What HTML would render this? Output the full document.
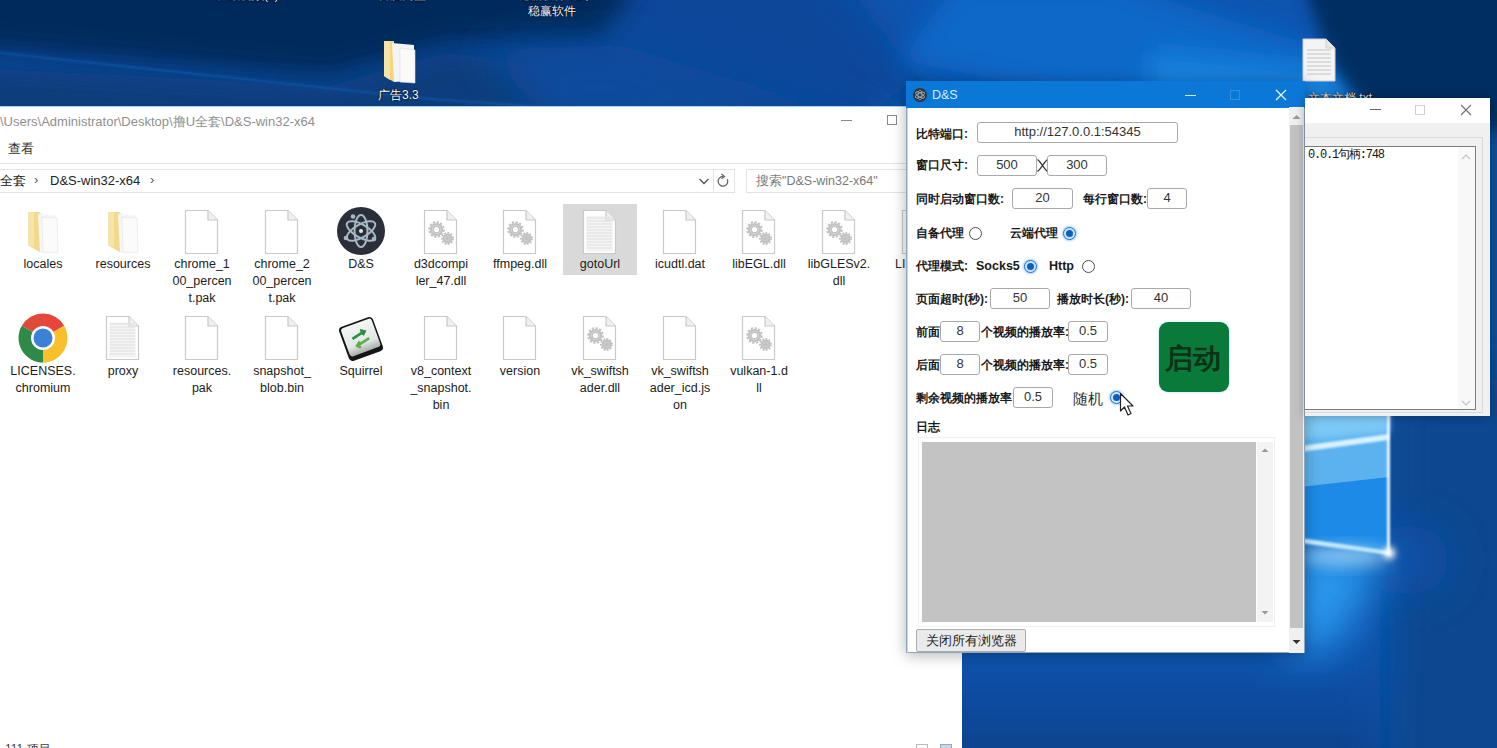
<!DOCTYPE html><html><head><meta charset="utf-8"><style>
*{margin:0;padding:0;box-sizing:border-box}
html,body{width:1497px;height:748px;overflow:hidden}
body{position:relative;font-family:"Liberation Sans",sans-serif;font-size:12px;color:#222;background:#0a4a9a}
.a{position:absolute}
.nw{white-space:nowrap}
.lbl{position:absolute;text-align:center;width:80px;font-size:12.5px;line-height:17px;color:#1c1c1c;word-break:break-all}
.tx{position:absolute;font-size:12px;font-weight:bold;color:#1a1a1a;white-space:nowrap;line-height:14px}
.box{position:absolute;border:1px solid #a9a9a9;border-radius:3px;background:#fff;font-size:13px;text-align:center;color:#333;line-height:18px}
.radio{position:absolute;width:13px;height:13px;border:1px solid #4d4d4d;border-radius:50%;background:#fff}
.radio.on{border-color:#1a7ad8;background:#cfe5f8;box-shadow:0 0 2px 1px rgba(80,160,240,.5)}
.radio.on:after{content:"";position:absolute;left:2px;top:2px;width:7px;height:7px;border-radius:50%;background:#0b5fc2}
</style></head><body>
<svg class="a" style="left:0;top:0" width="1497" height="748" viewBox="0 0 1497 748">
<defs>
<filter id="b20" x="-50%" y="-50%" width="200%" height="200%"><feGaussianBlur stdDeviation="20"/></filter>
<filter id="b12" x="-50%" y="-50%" width="200%" height="200%"><feGaussianBlur stdDeviation="12"/></filter>
<filter id="b8" x="-50%" y="-50%" width="200%" height="200%"><feGaussianBlur stdDeviation="8"/></filter>
<filter id="b3" x="-50%" y="-50%" width="200%" height="200%"><feGaussianBlur stdDeviation="3"/></filter>
<filter id="b1" x="-50%" y="-50%" width="200%" height="200%"><feGaussianBlur stdDeviation="1.2"/></filter>
<radialGradient id="rg1" cx="1120" cy="40" r="520" gradientUnits="userSpaceOnUse">
<stop offset="0" stop-color="#1070d4"/><stop offset=".45" stop-color="#0a58b0"/><stop offset="1" stop-color="#07336a"/></radialGradient>
<linearGradient id="lgb" x1="0" y1="650" x2="0" y2="748" gradientUnits="userSpaceOnUse"><stop offset="0" stop-color="#0a55b0"/><stop offset="1" stop-color="#08428e"/></linearGradient>
</defs>
<rect width="1497" height="748" fill="#0a4f9f"/>
<polygon points="-100,-100 1000,-100 1000,130 -100,130" fill="#0a52a8"/>
<polygon points="-100,-100 760,-100 950,50 850,130 -100,130" fill="#08469a" filter="url(#b12)"/>
<polygon points="-100,-100 690,-100 600,40 450,45 330,78 0,50 -100,50" fill="#062b5c" filter="url(#b12)"/>
<polygon points="-100,64 330,86 450,52 880,125 -100,125" fill="#093c7c" filter="url(#b12)"/>
<polygon points="480,50 620,45 900,130 560,130" fill="#0a4c9e" filter="url(#b20)"/>

<polygon points="780,-100 1340,-100 1320,130 960,130" fill="#0a55b0" filter="url(#b20)"/>
<polygon points="960,-20 1100,-20 1360,60 1360,110 1150,110 900,60" fill="#0c68c8" filter="url(#b12)"/>
<polygon points="1150,50 1350,70 1350,110 1150,110" fill="#1680dc" filter="url(#b12)"/>
<polygon points="1270,-100 1600,-100 1600,130 1380,130 1335,70" fill="#062f62" filter="url(#b8)"/>
<polyline points="0,53 430,99 560,108" fill="none" stroke="#0d52a2" stroke-width="2" filter="url(#b1)"/>
<!-- lower right -->
<rect x="950" y="400" width="600" height="400" fill="#0a50a4"/>
<polygon points="1390,380 1600,380 1600,800 1390,800" fill="#09468f" filter="url(#b20)"/>
<ellipse cx="1405" cy="560" rx="45" ry="35" fill="#0a50a6" filter="url(#b20)"/>
<rect x="900" y="590" width="480" height="220" fill="url(#lgb)" filter="url(#b20)"/>
<polygon points="1290,545 1389,553 1340,640 1290,660" fill="#2b98ee" filter="url(#b20)"/>
<polygon points="1300,410 1389,410 1389,553 1300,540" fill="#1c8ae6"/>
<polygon points="1300,410 1389,410 1389,477 1300,487" fill="#5cb2ee"/>
<polygon points="1300,410 1389,410 1389,432 1300,440" fill="#7cc8f6" filter="url(#b3)"/>
<polygon points="1300,446 1389,434 1389,440 1300,452" fill="#d8f2ff" filter="url(#b1)"/>
<polygon points="1300,538 1389,551 1389,555 1300,543" fill="#d0f0ff" filter="url(#b1)"/>
<rect x="1387" y="410" width="3" height="145" fill="#eaf8ff" filter="url(#b1)"/>
<ellipse cx="1345" cy="556" rx="45" ry="10" fill="#a8ddff" filter="url(#b8)" opacity=".75"/>
<circle cx="1389" cy="553" r="6" fill="#ffffff" filter="url(#b3)"/>
</svg>
<div class="a nw" style="left:216px;top:-10px;font-size:12px;color:#fff;text-shadow:0 0 2px #000">&nbsp;</div>
<div class="a nw" style="left:216px;top:-12px;font-size:12px;line-height:15px;color:#e8eef5;text-shadow:0 1px 2px #000,0 0 1px #000">腾讯视频(2)</div>
<div class="a nw" style="left:378px;top:-12px;font-size:12px;line-height:15px;color:#e8eef5;text-shadow:0 1px 2px #000,0 0 1px #000">百度网盘</div>
<div class="a nw" style="left:518px;top:-12px;font-size:12px;line-height:15px;color:#e8eef5;text-shadow:0 1px 2px #000,0 0 1px #000">稳赢软件-助手</div>
<div class="a nw" style="left:528px;top:4px;font-size:12px;line-height:15px;color:#eef;text-shadow:0 0 2px #000,0 0 1px #000">稳赢软件</div>
<svg class="a" style="left:380px;top:38px" width="40" height="48" viewBox="0 0 40 48">
<path d="M4 3 L14 3 L14 44 L4 38 Z" fill="#f3d57f"/>
<path d="M12 5 L34 7 L34 43 L14 44 Z" fill="#f4f4f4"/>
<path d="M20 10 L35 12 L35 45 L20 44 Z" fill="#fafafa" stroke="#ddd" stroke-width=".6"/>
<path d="M4 3 L10 3 L10 42 L4 38 Z" fill="#f6e3a6"/>
</svg>
<div class="a nw" style="left:378px;top:88px;font-size:12px;line-height:15px;color:#fff;text-shadow:0 0 2px #000,0 0 1px #000">广告3.3</div>
<svg class="a" style="left:1301px;top:38px" width="36" height="44" viewBox="0 0 36 44">
<path d="M2 1 H25 L34 10 V43 H2 Z" fill="#f4f4f4" stroke="#cfcfcf"/>
<path d="M25 1 V10 H34" fill="#e6e6e6" stroke="#cfcfcf"/>
<g stroke="#c4c4c4" stroke-width="1">
<line x1="6" y1="12" x2="30" y2="12"/><line x1="6" y1="16" x2="30" y2="16"/><line x1="6" y1="20" x2="30" y2="20"/>
<line x1="6" y1="24" x2="30" y2="24"/><line x1="6" y1="28" x2="30" y2="28"/><line x1="6" y1="32" x2="30" y2="32"/><line x1="6" y1="36" x2="30" y2="36"/></g>
</svg>
<div class="a nw" style="left:1308px;top:91px;font-size:12px;line-height:14px;color:#dfe8f0;text-shadow:0 1px 2px #000,0 0 1px #000">文本文档.txt</div>
<div class="a" style="left:0;top:106px;width:962px;height:642px;background:#fff;overflow:hidden">
<div class="a" style="left:0;top:0;width:962px;height:1px;background:#9fd4f6"></div>
<div class="a nw" style="left:0px;top:8px;font-size:13px;line-height:15px;color:#8f8f8f">\Users\Administrator\Desktop\撸U全套\D&amp;S-win32-x64</div>
<div class="a" style="left:841px;top:14px;width:11px;height:1px;background:#8a8a8a"></div>
<div class="a" style="left:887px;top:9px;width:10px;height:10px;border:1px solid #8a8a8a"></div>
<div class="a nw" style="left:8px;top:36px;font-size:12.5px;line-height:15px;color:#333">查看</div>
<div class="a" style="left:0;top:57px;width:962px;height:1px;background:#e3e3e3"></div>
<div class="a" style="left:0;top:63px;width:735px;height:24px;border:1px solid #e3e3e3;border-left:none"></div>
<div class="a" style="left:713px;top:63px;width:1px;height:24px;background:#e3e3e3"></div>
<svg class="a" style="left:698px;top:70px" width="12" height="10" viewBox="0 0 12 10"><path d="M1.5 3 L6 7.5 L10.5 3" fill="none" stroke="#555" stroke-width="1.4"/></svg>
<svg class="a" style="left:716px;top:67px" width="14" height="16" viewBox="0 0 14 16"><path d="M7 3.5 A4.8 4.8 0 1 0 11.3 6.2" fill="none" stroke="#666" stroke-width="1.3"/><path d="M5.5 1 L8.5 3.5 L5.5 5.8" fill="none" stroke="#666" stroke-width="1.3"/></svg>
<div class="a nw" style="left:0px;top:67px;font-size:13px;line-height:15px;color:#222">全套</div>
<div class="a nw" style="left:34px;top:66px;font-size:13px;line-height:15px;color:#555">›</div>
<div class="a nw" style="left:50px;top:67px;font-size:13px;line-height:15px;color:#222">D&amp;S-win32-x64</div>
<div class="a nw" style="left:150px;top:66px;font-size:13px;line-height:15px;color:#555">›</div>
<div class="a" style="left:746px;top:63px;width:230px;height:24px;border:1px solid #e3e3e3"></div>
<div class="a nw" style="left:756px;top:68px;font-size:12.5px;line-height:15px;color:#7a7a7a">搜索"D&amp;S-win32-x64"</div>
<div class="a" style="left:563px;top:98px;width:74px;height:71px;background:#d9d9d9"></div>
<svg class="a" style="left:26px;top:105px" width="34" height="44" viewBox="0 0 34 44">
<path d="M2 1 L13 1 L15 3 L15 42 L2 34 Z" fill="#f3d98a"/>
<path d="M12 3 L30 4 L31 41 L14 42 Z" fill="#f6f6f6"/>
<path d="M16 6 L31 7 L32 42 L17 41 Z" fill="#fbfbfb" stroke="#e2e2e2" stroke-width=".6"/>
<path d="M2 1 L8 1 L8 36 L2 34 Z" fill="#f6e4a8"/>
</svg>
<div class="lbl" style="left:3px;top:150px">locales</div>
<svg class="a" style="left:106px;top:105px" width="34" height="44" viewBox="0 0 34 44">
<path d="M2 1 L13 1 L15 3 L15 42 L2 34 Z" fill="#f3d98a"/>
<path d="M12 3 L30 4 L31 41 L14 42 Z" fill="#f6f6f6"/>
<path d="M16 6 L31 7 L32 42 L17 41 Z" fill="#fbfbfb" stroke="#e2e2e2" stroke-width=".6"/>
<path d="M2 1 L8 1 L8 36 L2 34 Z" fill="#f6e4a8"/>
</svg>
<div class="lbl" style="left:83px;top:150px">resources</div>
<svg class="a" style="left:184px;top:103px" width="36" height="46" viewBox="0 0 36 46"><path d="M1.5 1.5 H24 L33.5 11 V44.5 H1.5 Z" fill="#fff" stroke="#c9c9c9" stroke-width="1.2"/><path d="M24 1.5 V11 H33.5" fill="#f0f0f0" stroke="#c9c9c9" stroke-width="1.2"/></svg>
<div class="lbl" style="left:162px;top:150px">chrome_1<br>00_percen<br>t.pak</div>
<svg class="a" style="left:264px;top:103px" width="36" height="46" viewBox="0 0 36 46"><path d="M1.5 1.5 H24 L33.5 11 V44.5 H1.5 Z" fill="#fff" stroke="#c9c9c9" stroke-width="1.2"/><path d="M24 1.5 V11 H33.5" fill="#f0f0f0" stroke="#c9c9c9" stroke-width="1.2"/></svg>
<div class="lbl" style="left:242px;top:150px">chrome_2<br>00_percen<br>t.pak</div>
<svg class="a" style="left:336px;top:100px" width="50" height="50" viewBox="0 0 50 50">
<circle cx="25" cy="25" r="24" fill="#2c2f3a"/>
<g fill="none" stroke="#a6b8c4" stroke-width="2">
<ellipse cx="25" cy="25" rx="16" ry="6.5" transform="rotate(-30 25 25)"/>
<ellipse cx="25" cy="25" rx="16" ry="6.5" transform="rotate(30 25 25)"/>
<ellipse cx="25" cy="25" rx="16" ry="6.5" transform="rotate(90 25 25)"/></g>
<circle cx="25" cy="25" r="2" fill="#dfe8ee"/>
<circle cx="17" cy="10.5" r="2.3" fill="#a6b8c4"/><circle cx="10" cy="32" r="2.3" fill="#a6b8c4"/><circle cx="38" cy="33" r="2.3" fill="#a6b8c4"/>
</svg>
<div class="lbl" style="left:321px;top:150px">D&amp;S</div>
<svg class="a" style="left:423px;top:103px" width="36" height="46" viewBox="0 0 36 46"><path d="M1.5 1.5 H24 L33.5 11 V44.5 H1.5 Z" fill="#fff" stroke="#c9c9c9" stroke-width="1.2"/><path d="M24 1.5 V11 H33.5" fill="#f0f0f0" stroke="#c9c9c9" stroke-width="1.2"/><g fill="#c2c2c2"><circle cx="13.5" cy="20.5" r="6.6"/><circle cx="24.5" cy="29.5" r="5"/></g><g fill="none" stroke="#c2c2c2"><circle cx="13.5" cy="20.5" r="7.3" stroke-width="2" stroke-dasharray="2.3 1.5"/><circle cx="24.5" cy="29.5" r="5.6" stroke-width="1.8" stroke-dasharray="1.9 1.3"/></g><circle cx="13.5" cy="20.5" r="4.2" fill="none" stroke="#d6d6d6" stroke-width="1"/><circle cx="13.5" cy="20.5" r="2.6" fill="#fff"/><circle cx="24.5" cy="29.5" r="2.6" fill="none" stroke="#d2d2d2" stroke-width=".8"/></svg>
<div class="lbl" style="left:401px;top:150px">d3dcompi<br>ler_47.dll</div>
<svg class="a" style="left:502px;top:103px" width="36" height="46" viewBox="0 0 36 46"><path d="M1.5 1.5 H24 L33.5 11 V44.5 H1.5 Z" fill="#fff" stroke="#c9c9c9" stroke-width="1.2"/><path d="M24 1.5 V11 H33.5" fill="#f0f0f0" stroke="#c9c9c9" stroke-width="1.2"/><g fill="#c2c2c2"><circle cx="13.5" cy="20.5" r="6.6"/><circle cx="24.5" cy="29.5" r="5"/></g><g fill="none" stroke="#c2c2c2"><circle cx="13.5" cy="20.5" r="7.3" stroke-width="2" stroke-dasharray="2.3 1.5"/><circle cx="24.5" cy="29.5" r="5.6" stroke-width="1.8" stroke-dasharray="1.9 1.3"/></g><circle cx="13.5" cy="20.5" r="4.2" fill="none" stroke="#d6d6d6" stroke-width="1"/><circle cx="13.5" cy="20.5" r="2.6" fill="#fff"/><circle cx="24.5" cy="29.5" r="2.6" fill="none" stroke="#d2d2d2" stroke-width=".8"/></svg>
<div class="lbl" style="left:480px;top:150px">ffmpeg.dll</div>
<svg class="a" style="left:582px;top:103px" width="36" height="46" viewBox="0 0 36 46"><path d="M1.5 1.5 H24 L33.5 11 V44.5 H1.5 Z" fill="#fff" stroke="#c9c9c9" stroke-width="1.2"/><path d="M24 1.5 V11 H33.5" fill="#f0f0f0" stroke="#c9c9c9" stroke-width="1.2"/><g stroke="#cfcfcf"><line x1="5" y1="9" x2="30" y2="9"/><line x1="5" y1="12" x2="30" y2="12"/><line x1="5" y1="15" x2="30" y2="15"/><line x1="5" y1="18" x2="30" y2="18"/><line x1="5" y1="21" x2="30" y2="21"/><line x1="5" y1="24" x2="30" y2="24"/><line x1="5" y1="27" x2="30" y2="27"/><line x1="5" y1="30" x2="30" y2="30"/><line x1="5" y1="33" x2="30" y2="33"/><line x1="5" y1="36" x2="30" y2="36"/><line x1="5" y1="39" x2="30" y2="39"/></g><rect x="4" y="7" width="27" height="36" fill="#ececec" opacity=".5"/></svg>
<div class="lbl" style="left:560px;top:150px">gotoUrl</div>
<svg class="a" style="left:662px;top:103px" width="36" height="46" viewBox="0 0 36 46"><path d="M1.5 1.5 H24 L33.5 11 V44.5 H1.5 Z" fill="#fff" stroke="#c9c9c9" stroke-width="1.2"/><path d="M24 1.5 V11 H33.5" fill="#f0f0f0" stroke="#c9c9c9" stroke-width="1.2"/></svg>
<div class="lbl" style="left:640px;top:150px">icudtl.dat</div>
<svg class="a" style="left:741px;top:103px" width="36" height="46" viewBox="0 0 36 46"><path d="M1.5 1.5 H24 L33.5 11 V44.5 H1.5 Z" fill="#fff" stroke="#c9c9c9" stroke-width="1.2"/><path d="M24 1.5 V11 H33.5" fill="#f0f0f0" stroke="#c9c9c9" stroke-width="1.2"/><g fill="#c2c2c2"><circle cx="13.5" cy="20.5" r="6.6"/><circle cx="24.5" cy="29.5" r="5"/></g><g fill="none" stroke="#c2c2c2"><circle cx="13.5" cy="20.5" r="7.3" stroke-width="2" stroke-dasharray="2.3 1.5"/><circle cx="24.5" cy="29.5" r="5.6" stroke-width="1.8" stroke-dasharray="1.9 1.3"/></g><circle cx="13.5" cy="20.5" r="4.2" fill="none" stroke="#d6d6d6" stroke-width="1"/><circle cx="13.5" cy="20.5" r="2.6" fill="#fff"/><circle cx="24.5" cy="29.5" r="2.6" fill="none" stroke="#d2d2d2" stroke-width=".8"/></svg>
<div class="lbl" style="left:719px;top:150px">libEGL.dll</div>
<svg class="a" style="left:821px;top:103px" width="36" height="46" viewBox="0 0 36 46"><path d="M1.5 1.5 H24 L33.5 11 V44.5 H1.5 Z" fill="#fff" stroke="#c9c9c9" stroke-width="1.2"/><path d="M24 1.5 V11 H33.5" fill="#f0f0f0" stroke="#c9c9c9" stroke-width="1.2"/><g fill="#c2c2c2"><circle cx="13.5" cy="20.5" r="6.6"/><circle cx="24.5" cy="29.5" r="5"/></g><g fill="none" stroke="#c2c2c2"><circle cx="13.5" cy="20.5" r="7.3" stroke-width="2" stroke-dasharray="2.3 1.5"/><circle cx="24.5" cy="29.5" r="5.6" stroke-width="1.8" stroke-dasharray="1.9 1.3"/></g><circle cx="13.5" cy="20.5" r="4.2" fill="none" stroke="#d6d6d6" stroke-width="1"/><circle cx="13.5" cy="20.5" r="2.6" fill="#fff"/><circle cx="24.5" cy="29.5" r="2.6" fill="none" stroke="#d2d2d2" stroke-width=".8"/></svg>
<div class="lbl" style="left:799px;top:150px">libGLESv2.<br>dll</div>
<svg class="a" style="left:901px;top:103px" width="36" height="46" viewBox="0 0 36 46"><path d="M1.5 1.5 H24 L33.5 11 V44.5 H1.5 Z" fill="#fff" stroke="#c9c9c9" stroke-width="1.2"/><path d="M24 1.5 V11 H33.5" fill="#f0f0f0" stroke="#c9c9c9" stroke-width="1.2"/></svg>
<div class="a nw" style="left:895px;top:150px;font-size:12.5px;line-height:17px;color:#2a2a2a">LICENSES.</div>
<svg class="a" style="left:17px;top:206px" width="52" height="52" viewBox="0 0 52 52">
<path d="M26 26 L26 1.5 A24.5 24.5 0 0 1 47.2 13.75 Z" fill="#e8463a"/>
<path d="M26 26 L26 1.5 A24.5 24.5 0 0 0 4.8 13.75 Z" fill="#df4a38"/>
<path d="M26 26 L4.8 13.75 A24.5 24.5 0 0 0 26 50.5 Z" fill="#2f8a47"/>
<path d="M26 26 L26 50.5 A24.5 24.5 0 0 0 47.2 13.75 Z" fill="#f8c02c"/>
<circle cx="26" cy="26" r="12" fill="#fff"/>
<circle cx="26" cy="26" r="9.5" fill="#3b82d6"/>
</svg>
<div class="lbl" style="left:3px;top:257px">LICENSES.<br>chromium</div>
<svg class="a" style="left:105px;top:209px" width="36" height="46" viewBox="0 0 36 46"><path d="M1.5 1.5 H24 L33.5 11 V44.5 H1.5 Z" fill="#fff" stroke="#c9c9c9" stroke-width="1.2"/><path d="M24 1.5 V11 H33.5" fill="#f0f0f0" stroke="#c9c9c9" stroke-width="1.2"/><g stroke="#cfcfcf"><line x1="5" y1="9" x2="30" y2="9"/><line x1="5" y1="12" x2="30" y2="12"/><line x1="5" y1="15" x2="30" y2="15"/><line x1="5" y1="18" x2="30" y2="18"/><line x1="5" y1="21" x2="30" y2="21"/><line x1="5" y1="24" x2="30" y2="24"/><line x1="5" y1="27" x2="30" y2="27"/><line x1="5" y1="30" x2="30" y2="30"/><line x1="5" y1="33" x2="30" y2="33"/><line x1="5" y1="36" x2="30" y2="36"/><line x1="5" y1="39" x2="30" y2="39"/></g><rect x="4" y="7" width="27" height="36" fill="#ececec" opacity=".5"/></svg>
<div class="lbl" style="left:83px;top:257px">proxy</div>
<svg class="a" style="left:184px;top:209px" width="36" height="46" viewBox="0 0 36 46"><path d="M1.5 1.5 H24 L33.5 11 V44.5 H1.5 Z" fill="#fff" stroke="#c9c9c9" stroke-width="1.2"/><path d="M24 1.5 V11 H33.5" fill="#f0f0f0" stroke="#c9c9c9" stroke-width="1.2"/></svg>
<div class="lbl" style="left:162px;top:257px">resources.<br>pak</div>
<svg class="a" style="left:264px;top:209px" width="36" height="46" viewBox="0 0 36 46"><path d="M1.5 1.5 H24 L33.5 11 V44.5 H1.5 Z" fill="#fff" stroke="#c9c9c9" stroke-width="1.2"/><path d="M24 1.5 V11 H33.5" fill="#f0f0f0" stroke="#c9c9c9" stroke-width="1.2"/></svg>
<div class="lbl" style="left:242px;top:257px">snapshot_<br>blob.bin</div>
<svg class="a" style="left:336px;top:208px" width="50" height="50" viewBox="0 0 50 50">
<defs><linearGradient id="sqg" x1="0" y1="0" x2="0" y2="1"><stop offset="0" stop-color="#f4f6f6"/><stop offset=".7" stop-color="#e2e6e6"/><stop offset="1" stop-color="#a8acac"/></linearGradient></defs>
<g transform="rotate(-20 25 25)"><rect x="7" y="7" width="36" height="36" rx="4" fill="#151515"/>
<rect x="9" y="8.5" width="32.5" height="30" rx="3" fill="url(#sqg)"/>
<path d="M17 22 L30 19 M27 16.5 L31 19 L28 22" fill="none" stroke="#2f8f3f" stroke-width="2.6"/>
<path d="M33 27 L20 30 M23 27 L19 30 L22 33" fill="none" stroke="#5cb04a" stroke-width="2.6"/></g>
</svg>
<div class="lbl" style="left:321px;top:257px">Squirrel</div>
<svg class="a" style="left:423px;top:209px" width="36" height="46" viewBox="0 0 36 46"><path d="M1.5 1.5 H24 L33.5 11 V44.5 H1.5 Z" fill="#fff" stroke="#c9c9c9" stroke-width="1.2"/><path d="M24 1.5 V11 H33.5" fill="#f0f0f0" stroke="#c9c9c9" stroke-width="1.2"/></svg>
<div class="lbl" style="left:401px;top:257px">v8_context<br>_snapshot.<br>bin</div>
<svg class="a" style="left:502px;top:209px" width="36" height="46" viewBox="0 0 36 46"><path d="M1.5 1.5 H24 L33.5 11 V44.5 H1.5 Z" fill="#fff" stroke="#c9c9c9" stroke-width="1.2"/><path d="M24 1.5 V11 H33.5" fill="#f0f0f0" stroke="#c9c9c9" stroke-width="1.2"/></svg>
<div class="lbl" style="left:480px;top:257px">version</div>
<svg class="a" style="left:582px;top:209px" width="36" height="46" viewBox="0 0 36 46"><path d="M1.5 1.5 H24 L33.5 11 V44.5 H1.5 Z" fill="#fff" stroke="#c9c9c9" stroke-width="1.2"/><path d="M24 1.5 V11 H33.5" fill="#f0f0f0" stroke="#c9c9c9" stroke-width="1.2"/><g fill="#c2c2c2"><circle cx="13.5" cy="20.5" r="6.6"/><circle cx="24.5" cy="29.5" r="5"/></g><g fill="none" stroke="#c2c2c2"><circle cx="13.5" cy="20.5" r="7.3" stroke-width="2" stroke-dasharray="2.3 1.5"/><circle cx="24.5" cy="29.5" r="5.6" stroke-width="1.8" stroke-dasharray="1.9 1.3"/></g><circle cx="13.5" cy="20.5" r="4.2" fill="none" stroke="#d6d6d6" stroke-width="1"/><circle cx="13.5" cy="20.5" r="2.6" fill="#fff"/><circle cx="24.5" cy="29.5" r="2.6" fill="none" stroke="#d2d2d2" stroke-width=".8"/></svg>
<div class="lbl" style="left:560px;top:257px">vk_swiftsh<br>ader.dll</div>
<svg class="a" style="left:662px;top:209px" width="36" height="46" viewBox="0 0 36 46"><path d="M1.5 1.5 H24 L33.5 11 V44.5 H1.5 Z" fill="#fff" stroke="#c9c9c9" stroke-width="1.2"/><path d="M24 1.5 V11 H33.5" fill="#f0f0f0" stroke="#c9c9c9" stroke-width="1.2"/></svg>
<div class="lbl" style="left:640px;top:257px">vk_swiftsh<br>ader_icd.js<br>on</div>
<svg class="a" style="left:741px;top:209px" width="36" height="46" viewBox="0 0 36 46"><path d="M1.5 1.5 H24 L33.5 11 V44.5 H1.5 Z" fill="#fff" stroke="#c9c9c9" stroke-width="1.2"/><path d="M24 1.5 V11 H33.5" fill="#f0f0f0" stroke="#c9c9c9" stroke-width="1.2"/><g fill="#c2c2c2"><circle cx="13.5" cy="20.5" r="6.6"/><circle cx="24.5" cy="29.5" r="5"/></g><g fill="none" stroke="#c2c2c2"><circle cx="13.5" cy="20.5" r="7.3" stroke-width="2" stroke-dasharray="2.3 1.5"/><circle cx="24.5" cy="29.5" r="5.6" stroke-width="1.8" stroke-dasharray="1.9 1.3"/></g><circle cx="13.5" cy="20.5" r="4.2" fill="none" stroke="#d6d6d6" stroke-width="1"/><circle cx="13.5" cy="20.5" r="2.6" fill="#fff"/><circle cx="24.5" cy="29.5" r="2.6" fill="none" stroke="#d2d2d2" stroke-width=".8"/></svg>
<div class="lbl" style="left:719px;top:257px">vulkan-1.d<br>ll</div>
<div class="a nw" style="left:5px;top:636px;font-size:12px;line-height:14px;color:#444">111 项目</div>
<div class="a" style="left:916px;top:638px;width:12px;height:8px;border:1px solid #bbb"></div>
<div class="a" style="left:940px;top:638px;width:12px;height:8px;background:#c5d8ea;border:1px solid #9ab"></div>
</div>
<div class="a" style="left:906px;top:81px;width:399px;height:572px;background:#fff;border:1px solid #8ea6bd;box-shadow:0 2px 14px rgba(0,0,0,.3)">
<div class="a" style="left:-1px;top:-1px;width:399px;height:27px;background:#0b78d7"></div>
<div class="a" style="left:0;top:26px;width:1px;height:545px;background:#c6d8e6"></div>
<svg class="a" style="left:5px;top:5px" width="16" height="16" viewBox="0 0 16 16"><circle cx="8" cy="8" r="7" fill="#2d3340"/>
<g fill="none" stroke="#9aa" stroke-width=".9"><ellipse cx="8" cy="8" rx="5" ry="2" transform="rotate(-30 8 8)"/><ellipse cx="8" cy="8" rx="5" ry="2" transform="rotate(30 8 8)"/><ellipse cx="8" cy="8" rx="5" ry="2" transform="rotate(90 8 8)"/></g></svg>
<div class="a nw" style="left:25px;top:6px;font-size:12.5px;line-height:15px;color:#d6ecff">D&amp;S</div>
<div class="a" style="left:278px;top:13px;width:11px;height:1px;background:#cfe6fb"></div>
<div class="a" style="left:323px;top:8px;width:10px;height:10px;border:1px solid rgba(200,230,255,.22)"></div>
<svg class="a" style="left:368px;top:7px" width="12" height="12" viewBox="0 0 12 12"><path d="M1 1 L11 11 M11 1 L1 11" stroke="#e6f4ff" stroke-width="1.3"/></svg>
<div class="tx" style="left:9px;top:45px">比特端口:</div>
<div class="box" style="left:70px;top:40px;width:201px;height:21px">http://127.0.0.1:54345</div>
<div class="tx" style="left:9px;top:76px">窗口尺寸:</div>
<div class="box" style="left:70px;top:73px;width:60px;height:21px">500</div>
<svg class="a" style="left:129px;top:76px" width="13" height="15" viewBox="0 0 13 15"><path d="M1.5 1.5 C5 4 8 11 11.5 13.5 M11.5 1.5 C8 4 5 11 1.5 13.5" fill="none" stroke="#2a2a2a" stroke-width="1.3"/></svg>
<div class="box" style="left:140px;top:73px;width:60px;height:21px">300</div>
<div class="tx" style="left:9px;top:110px">同时启动窗口数:</div>
<div class="box" style="left:105px;top:106px;width:61px;height:21px">20</div>
<div class="tx" style="left:176px;top:110px">每行窗口数:</div>
<div class="box" style="left:240px;top:106px;width:40px;height:21px">4</div>
<div class="tx" style="left:9px;top:144px">自备代理</div>
<div class="radio" style="left:62px;top:145px"></div>
<div class="tx" style="left:103px;top:144px">云端代理</div>
<div class="radio on" style="left:156px;top:145px"></div>
<div class="tx" style="left:9px;top:177px">代理模式:</div>
<div class="tx" style="left:69px;top:177px;font-size:12.5px">Socks5</div>
<div class="radio on" style="left:117px;top:178px"></div>
<div class="tx" style="left:142px;top:177px;font-size:12.5px">Http</div>
<div class="radio" style="left:175px;top:178px"></div>
<div class="tx" style="left:9px;top:210px">页面超时(秒):</div>
<div class="box" style="left:83px;top:206px;width:60px;height:21px">50</div>
<div class="tx" style="left:150px;top:210px">播放时长(秒):</div>
<div class="box" style="left:224px;top:206px;width:60px;height:21px">40</div>
<div class="tx" style="left:9px;top:243px">前面</div>
<div class="box" style="left:33px;top:239px;width:40px;height:21px">8</div>
<div class="tx" style="left:74px;top:243px">个视频的播放率:</div>
<div class="box" style="left:161px;top:239px;width:40px;height:21px">0.5</div>
<div class="tx" style="left:9px;top:276px">后面</div>
<div class="box" style="left:33px;top:272px;width:40px;height:21px">8</div>
<div class="tx" style="left:74px;top:276px">个视频的播放率:</div>
<div class="box" style="left:161px;top:272px;width:40px;height:21px">0.5</div>
<div class="tx" style="left:9px;top:309px">剩余视频的播放率</div>
<div class="box" style="left:106px;top:305px;width:40px;height:21px">0.5</div>
<div class="a nw" style="left:166px;top:308px;font-size:15px;line-height:17px;color:#333">随机</div>
<div class="radio on" style="left:203px;top:309px"></div>
<div class="a" style="left:252px;top:240px;width:70px;height:70px;background:#0a7a3a;border-radius:9px;box-shadow:0 0 3px rgba(120,200,255,.6)"></div>
<div class="a nw" style="left:258px;top:262px;font-size:28px;font-weight:bold;line-height:30px;color:#0b3216">启动</div>
<div class="tx" style="left:9px;top:338px">日志</div>
<div class="a" style="left:11px;top:355px;width:357px;height:190px;border:1px solid #f0f0f0;background:#fff"></div>
<div class="a" style="left:15px;top:360px;width:334px;height:180px;background:#c3c3c3"></div>
<div class="a" style="left:350px;top:360px;width:16px;height:180px;background:#f3f3f3"></div>
<svg class="a" style="left:352px;top:364px" width="12" height="8"><path d="M2.5 6 L6 2.5 L9.5 6 Z" fill="#999"/></svg>
<svg class="a" style="left:352px;top:527px" width="12" height="8"><path d="M2.5 2 L6 5.5 L9.5 2 Z" fill="#999"/></svg>
<div class="a nw" style="left:9px;top:547px;width:110px;height:23px;border:1px solid #adadad;border-radius:2px;background:#eaeaea;font-size:13px;line-height:21px;text-align:center;color:#222">关闭所有浏览器</div>
<div class="a" style="left:382px;top:25px;width:15px;height:546px;background:#f0f0f0"></div>
<div class="a" style="left:383px;top:43px;width:13px;height:503px;background:#c2c2c2"></div>
<svg class="a" style="left:383px;top:30px" width="13" height="10"><path d="M2.5 7 L6.5 3 L10.5 7 Z" fill="#9a9a9a"/></svg>
<svg class="a" style="left:383px;top:555px" width="13" height="10"><path d="M2.5 3 L6.5 7 L10.5 3 Z" fill="#333"/></svg>
</div>
<svg class="a" style="left:1119px;top:392px" width="18" height="26" viewBox="0 0 18 26">
<path d="M1.5 1.5 L1.5 19 L5.5 15 L9 23 L12 21.5 L8.5 14 L14 14 Z" fill="#fff" stroke="#222" stroke-width="1.2" stroke-linejoin="round"/></svg>
<div class="a" style="left:1305px;top:98px;width:185px;height:318px;background:#f0f0f0;box-shadow:0 0 10px rgba(0,0,0,.3);overflow:hidden">
<div class="a" style="left:0;top:0;width:185px;height:25px;background:#fff"></div>
<div class="a" style="left:-2px;top:39px;width:180px;height:276px;border:1px solid #dadada"></div>
<div class="a" style="left:-5px;top:48px;width:176px;height:264px;border:1px solid #7c7c7c;background:#fff"></div>
<div class="a nw" style="left:3px;top:49px;font-family:'Liberation Mono',monospace;font-size:12px;letter-spacing:-1.2px;line-height:14px;color:#111">0.0.1<span style="font-family:'Liberation Sans',sans-serif;font-size:12px">句柄</span>:748</div>
<div class="a" style="left:65px;top:11px;width:11px;height:1px;background:#666"></div>
<div class="a" style="left:110px;top:7px;width:10px;height:10px;border:1px solid #d0d0d0"></div>
<svg class="a" style="left:155px;top:6px" width="12" height="12" viewBox="0 0 12 12"><path d="M1 1 L11 11 M11 1 L1 11" stroke="#707070" stroke-width="1.1"/></svg>
<div class="a" style="left:153px;top:49px;width:17px;height:262px;background:#f8f8f8"></div>
<svg class="a" style="left:155px;top:55px" width="12" height="8"><path d="M2 6 L6 2 L10 6" fill="none" stroke="#c4c4c4" stroke-width="1.2"/></svg>
<svg class="a" style="left:155px;top:301px" width="12" height="8"><path d="M2 2 L6 6 L10 2" fill="none" stroke="#c4c4c4" stroke-width="1.2"/></svg>
</div>
</body></html>
